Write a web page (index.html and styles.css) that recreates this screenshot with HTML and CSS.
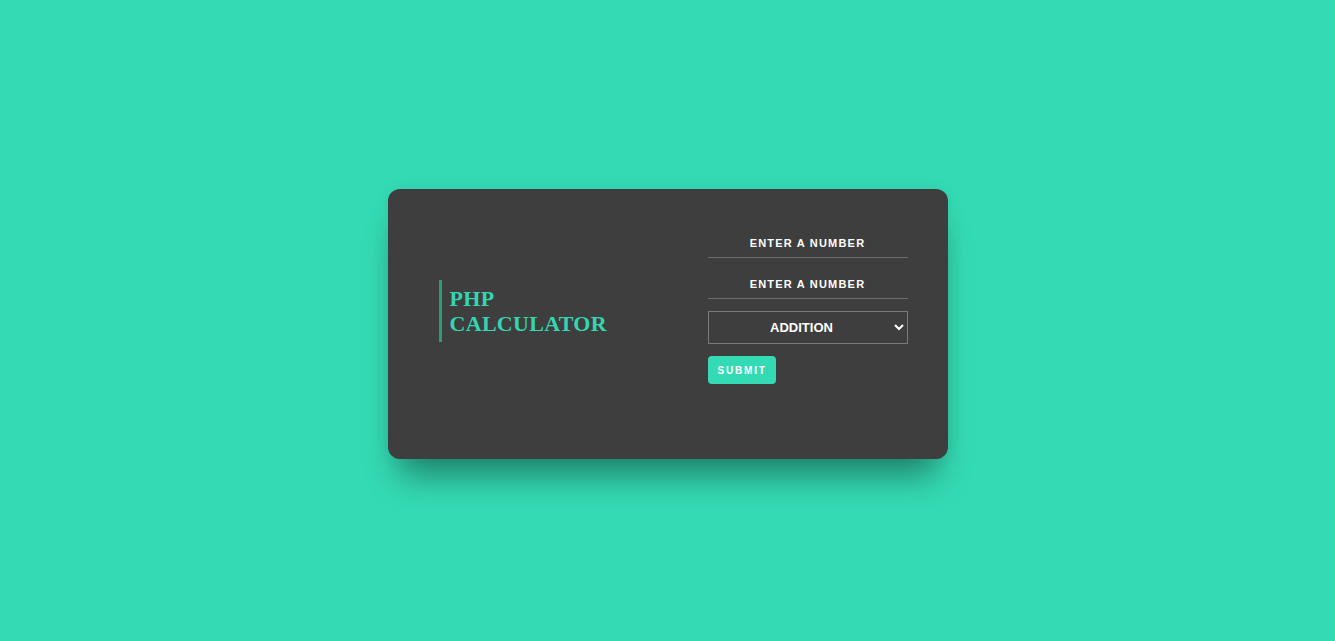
FILE: index.html
```html
<!DOCTYPE html>
<html lang="en">
<head>
<meta charset="utf-8">
<title>PHP Calculator</title>
<link rel="stylesheet" href="styles.css">
</head>
<body>
<main class="card">
  <div class="brand">
    <h1 class="brand-title">PHP<br>CALCULATOR</h1>
  </div>
  <form class="calc-form">
    <input class="num-input" type="text" placeholder="Enter a number">
    <input class="num-input" type="text" placeholder="Enter a number">
    <select class="op-select">
      <option>ADDITION</option>
      <option>SUBTRACTION</option>
      <option>MULTIPLICATION</option>
      <option>DIVISION</option>
    </select>
    <button class="submit-btn" type="button">SUBMIT</button>
  </form>
</main>
</body>
</html>
```

FILE: styles.css
```css
html, body {
  margin: 0;
  padding: 0;
}
body {
  background: #34dab3;
  height: 100vh;
  display: flex;
  align-items: center;
  justify-content: center;
  font-family: "Liberation Sans", Arial, sans-serif;
}
.card {
  width: 560px;
  height: 270px;
  box-sizing: border-box;
  margin-top: 7px;
  background: #3e3e3e;
  border-radius: 12px;
  box-shadow: 0 0 18px rgba(0, 0, 0, 0.06), 0 28px 32px -12px rgba(0, 0, 0, 0.4);
  display: flex;
  justify-content: space-between;
  align-items: flex-start;
  padding: 40px 40px 0 51px;
}
.brand {
  margin-top: 51px;
  border-left: 3px solid #2a9b7b;
  padding: 6px 0 6px 8px;
}
.brand-title {
  margin: 0;
  font-family: "Liberation Serif", "Times New Roman", serif;
  font-weight: bold;
  font-size: 22px;
  line-height: 25px;
  letter-spacing: 0.3px;
  color: #34d5b1;
}
.calc-form {
  width: 200px;
  display: flex;
  flex-direction: column;
  align-items: flex-start;
}
.num-input {
  width: 200px;
  height: 29px;
  box-sizing: border-box;
  margin: 0 0 12px 0;
  padding: 0;
  background: transparent;
  border: none;
  border-bottom: 1px solid #6b6b6b;
  color: #fff;
  text-align: center;
  font-family: "Liberation Sans", Arial, sans-serif;
  font-weight: bold;
  font-size: 11px;
  letter-spacing: 1.2px;
  outline: none;
}
.num-input::placeholder {
  color: #fff;
  text-transform: uppercase;
  opacity: 1;
}
.op-select {
  width: 200px;
  height: 33px;
  box-sizing: border-box;
  margin: 0 0 12px 0;
  background: #3e3e3e;
  border: 1px solid #7a7a7a;
  border-radius: 0;
  color: #fff;
  font-family: "Liberation Sans", Arial, sans-serif;
  font-weight: bold;
  font-size: 13px;
  text-align: center;
  text-align-last: center;
  outline: none;
}
.submit-btn {
  height: 28px;
  padding: 0 9px 0 10px;
  background: #34dab3;
  border: none;
  border-radius: 4px;
  color: #fff;
  font-family: "Liberation Sans", Arial, sans-serif;
  font-weight: bold;
  font-size: 10px;
  letter-spacing: 1.8px;
  cursor: pointer;
}
```
